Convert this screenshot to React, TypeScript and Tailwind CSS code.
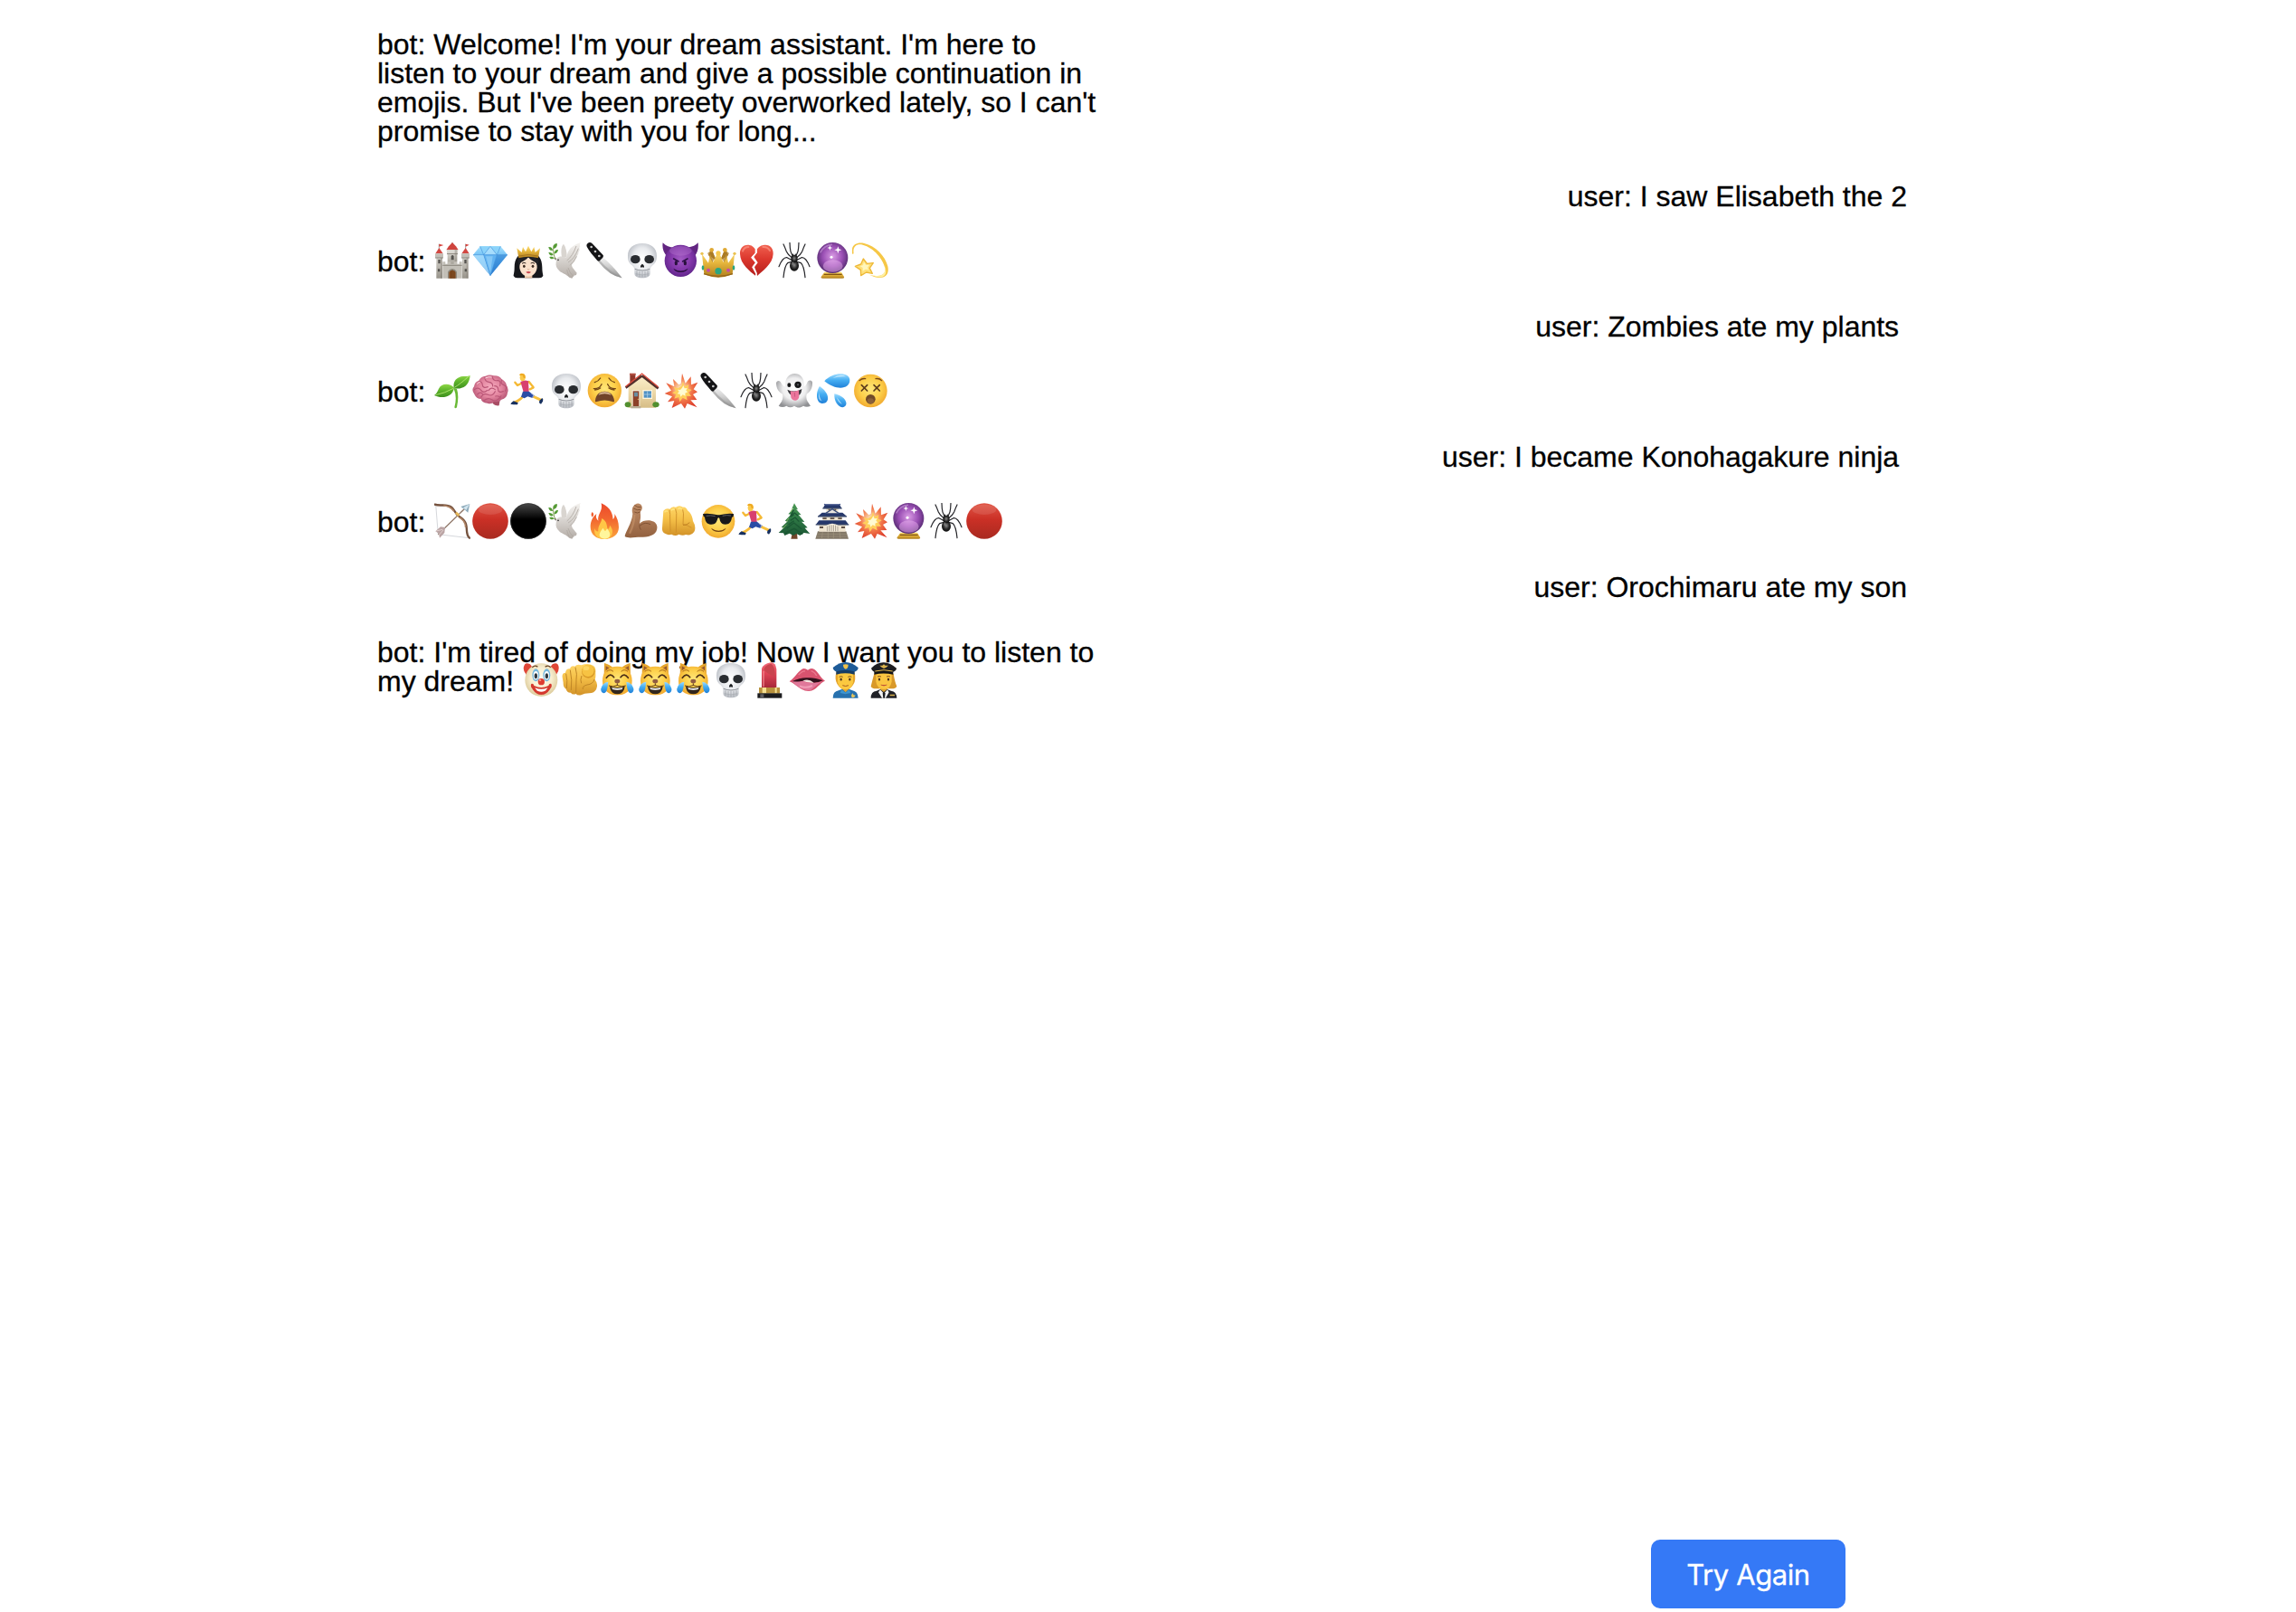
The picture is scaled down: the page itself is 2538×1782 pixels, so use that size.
import React from "react";

/* Shared gradients for the emoji drawings */
function Gradients() {
  const radial: [string, string[]][] = [
    ["gFace", ["#ffe77a", "#fdd04a", "#f0a52c"]],
    ["gSkull", ["#ffffff", "#e9ebee", "#b4b8bf"]],
    ["gDevil", ["#a35bc4", "#8438ab", "#5d2388"]],
    ["gBall", ["#d99be4", "#9a4fb4", "#4c2668"]],
    ["gBrain", ["#f6adc0", "#e3859f", "#b0506f"]],
    ["gBurst", ["#fffbd0", "#f2784a", "#dd3f2c"]],
    ["gGhost", ["#ffffff", "#eeeeef", "#8f9093"]],
    ["gSpider", ["#8a8a8a", "#2a2a2a", "#050505"]],
    ["gClown", ["#fffdf0", "#f8eed0", "#d9c795"]],
  ];
  const linear: [string, string[]][] = [
    ["gStone", ["#dddbd5", "#c4c1b9", "#97938a"]],
    ["gGold", ["#ffe27a", "#e6b63d", "#b07d1c"]],
    ["gRed", ["#e05545", "#cb3026", "#a82a20"]],
    ["gHeart", ["#f0604f", "#dc382e", "#b51f1c"]],
    ["gBlack", ["#4a4a4a", "#000000", "#000000"]],
    ["gDove", ["#f4f2ef", "#dad6d2", "#b3aca6"]],
    ["gBlade", ["#f2f2f2", "#cfcfcf", "#8c8c8c"]],
    ["gGem", ["#a8e3ff", "#5bb1f0", "#2c7fd4"]],
    ["gLeaf", ["#8fd747", "#5fb52c", "#3d8f1d"]],
    ["gHand", ["#ffd768", "#f5c048", "#d29228"]],
    ["gArm", ["#bb8964", "#ad7a56", "#92613f"]],
    ["gFire", ["#ec4a2c", "#f2662f", "#fba63a"]],
    ["gTree", ["#4d9a55", "#2f7a45", "#1c5734"]],
    ["gDrop", ["#9fdcff", "#46aef2", "#1f80d8"]],
    ["gLip", ["#f06a7a", "#dd4355", "#a8283a"]],
    ["gWall", ["#fbeecb", "#efdcae", "#d6bd86"]],
  ];
  return (
    <svg className="absolute h-0 w-0" aria-hidden="true">
      <defs>
        {radial.map(([id, c]) => (
          <radialGradient key={id} id={id} cx="0.5" cy="0.45" r="0.58">
            <stop offset="0" stopColor={c[0]} />
            <stop offset="0.55" stopColor={c[1]} />
            <stop offset="1" stopColor={c[2]} />
          </radialGradient>
        ))}
        {linear.map(([id, c]) => (
          <linearGradient key={id} id={id} x1="0" y1="0" x2="0" y2="1">
            <stop offset="0" stopColor={c[0]} />
            <stop offset="0.45" stopColor={c[1]} />
            <stop offset="1" stopColor={c[2]} />
          </linearGradient>
        ))}
      </defs>
    </svg>
  );
}

const u = (id: string) => `url(#${id})`;

const skull = (
  <>
    <path d="M60 3C30 3 12 19 12 44c0 16 4 24 12 30 5 4 7 8 10 12v16c0 11 10 16 26 16s26-5 26-16V86c3-4 5-8 10-12 8-6 12-14 12-30C108 19 90 3 60 3z" fill={u("gSkull")} />
    <path d="M35 88q25 10 50 0" stroke="#8c9096" strokeWidth="3" fill="none" />
    <ellipse cx="37" cy="56" rx="16" ry="14" fill="#292c30" />
    <ellipse cx="83" cy="56" rx="16" ry="14" fill="#292c30" />
    <path d="M60 71c-5 3-8 9-5 12 2 1 3-1 5-1s3 2 5 1c3-3 0-9-5-12z" fill="#1d1f22" />
    <path d="M42 94v17M51 96v19M60 96v20M69 96v19M78 94v17" stroke="#a3a7ad" strokeWidth="2.5" />
    <path d="M38 104q22 8 44 0" stroke="#a3a7ad" strokeWidth="2" fill="none" />
  </>
);

const spider = (
  <>
    <g fill="none" stroke="#26262a" strokeWidth="3.6" strokeLinejoin="round" strokeLinecap="round">
      <path d="M52 50Q38 40 34 30 29 16 24 6M68 50Q82 40 86 30 91 16 96 6" />
      <path d="M54 44Q46 30 46 18L45 1M66 44Q74 30 74 18L75 1" />
      <path d="M50 58 36 50Q22 48 9 80M70 58 84 50Q98 48 111 80" />
      <path d="M52 64 38 68Q28 76 24 116M68 64 82 68Q92 76 96 116" />
    </g>
    <ellipse cx="60" cy="77" rx="15" ry="18" fill={u("gSpider")} />
    <ellipse cx="60" cy="54" rx="11" ry="13" fill={u("gSpider")} />
    <path d="M56 42v-4M64 42v-4" stroke="#111" strokeWidth="3" />
    <ellipse cx="55" cy="70" rx="4" ry="6" fill="#8b8b8b" opacity="0.6" />
  </>
);

const ball = (
  <>
    <path d="M34 98h56l9 16q2 5-5 5H28q-7 0-5-5z" fill={u("gGold")} />
    <path d="M32 106h60" stroke="#7f5413" strokeWidth="4" />
    <circle cx="61" cy="51" r="51" fill={u("gBall")} />
    <ellipse cx="62" cy="78" rx="33" ry="20" fill="#f0b9f3" opacity="0.45" />
    <path d="M20 34Q32 9 60 7" stroke="#d7a9e6" strokeWidth="5" fill="none" opacity="0.5" />
    <path d="m52 9 2 7 7 2-7 2-2 7-2-7-7-2 7-2zM79 13l3 9 9 3-9 3-3 9-3-9-9-3 9-3z" fill="#fff" />
    <circle cx="57" cy="49" r="4.5" fill="#fff" />
  </>
);

const knife = (
  <>
    <path d="M40 64 54 49Q82 70 119 118q-42-7-79-54z" fill={u("gBlade")} />
    <path d="M40 64 45 59Q74 94 119 118q-42-7-79-54z" fill="#929292" opacity="0.5" />
    <path d="M5 3Q12-3 20 4l36 38q2 4-1 8L43 62q-4 1-7-3C24 45 10 30 3 16 0 10 1 6 5 3z" fill="#141416" />
    <circle cx="17" cy="15" r="4" fill="#c9c9c9" />
    <circle cx="30" cy="30" r="4" fill="#c9c9c9" />
    <circle cx="43" cy="45" r="4" fill="#c9c9c9" />
  </>
);

const dove = (
  <>
    <path d="M28 53C42 40 52 52 62 48 63 26 79 9 108 0c-5 7-3 9-2 13-4 5-2 8-2 13-5 5-3 9-5 14-4 4-3 10-8 15-4 8-9 13-13 19 0 9 9 16 17 27l-2 7-8 2-6 9-9-3C57 103 48 103 38 95 27 86 24 76 26 66z" fill={u("gDove")} />
    <path d="M62 48C62 33 59 16 51 5 42 13 42 32 45 48z" fill="#d9d5d0" />
    <path d="M66 66Q88 54 100 20M62 60Q82 44 93 12M72 76Q86 66 94 46" stroke="#b9b3ad" strokeWidth="3" fill="none" />
    <path d="M66 84q4 17 18 29M62 90q2 12 8 22" stroke="#aaa39c" strokeWidth="2" fill="none" />
    <circle cx="33" cy="58" r="2.4" fill="#222" />
    <path d="m27 53-9-3 7 9z" fill="#6d625b" />
    <path d="M24 54Q14 38 18 10" stroke="#63852f" strokeWidth="2.4" fill="none" />
    <path d="M18 21c-3-13 4-18 12-17 0 10-4 16-12 17zM15 27C5 28 2 22 1 15c8-1 14 4 14 12zM19 37c2-12 9-14 14-13-1 9-7 14-14 13zM17 42C8 46 3 40 1 33c8-1 14 3 16 9zM20 52C13 58 6 54 4 48c7-2 13-1 16 4z" fill="#559b35" />
  </>
);

const burst = (
  <>
    <path d="m62 36 4-34 11 33 18-22 1 27 22-8-14 23 13 9-15 8 13 18-21 1 22 24-33-13-8 17-12-17-31 15 8-24-22 4 15-18-25-10 22-10-17-25 27 12-4-25 19 19z" fill={u("gBurst")} />
    <path d="m64 44 5-15 5 17 14-7-2 14 12 4-11 8 9 13-16-1 3 14-15-8-10 14-3-16-15 5 6-14-13-5 13-7-9-13 15 5z" fill="#ffcf5c" />
    <path d="m66 50 4-8 4 10 9-1-4 8 6 5-9 4 1 9-9-4-7 7-2-9-9-1 6-7-5-7 9 1z" fill="#fffbd2" />
  </>
);

const runner = (
  <>
    <path d="M47 70Q38 90 12 99" stroke="#f6bc3a" strokeWidth="8" fill="none" strokeLinecap="round" />
    <path d="m68 75 30 14 4 1" stroke="#f8c23e" strokeWidth="9" fill="none" strokeLinecap="round" />
    <path d="m36 36-12 6-8-10" stroke="#f5b934" strokeWidth="7" fill="none" strokeLinejoin="round" strokeLinecap="round" />
    <path d="m62 30 15 19-12 6" stroke="#f5b934" strokeWidth="7" fill="none" strokeLinejoin="round" strokeLinecap="round" />
    <path d="M34 30Q48 22 60 28l2 36H44Z" fill="#d8406f" />
    <path d="M42 62h20l18 13-6 9-16-5-11 6-11-5z" fill="#2a4ca5" />
    <path d="m68 67 10 8-5 8" fill="none" stroke="#e9edf7" strokeWidth="2" />
    <path d="m11 94 15 6-2 6H11l-10-2q2-5 10-10zM97 92l9-8q5 4 2 11l-6 9-6-4z" fill="#17305f" />
    <ellipse cx="41" cy="16" rx="9" ry="12" fill="#fac94b" />
    <path d="M30 9Q32 0 42 3q10 2 8 16l-6-2-3-8z" fill="#efaa23" />
  </>
);

const redCircle = (
  <>
    <circle cx="60" cy="60" r="59.5" fill={u("gRed")} />
    <ellipse cx="60" cy="22" rx="40" ry="17" fill="#fff" opacity="0.1" />
  </>
);

const joyCat = (
  <>
    <path d="M17 47 18 3Q37 8 48 20h26Q85 8 104 3l1 44z" fill="#e5a52e" />
    <path d="M23 27V13q10 5 16 11zM99 27V13q-10 5-16 11z" fill="#96592f" />
    <path d="M61 14c33 0 49 20 49 48 0 30-19 47-49 47S12 92 12 62c0-28 16-48 49-48z" fill={u("gFace")} />
    <path d="M26 31q11-10 22 0M74 31q11-10 22 0" stroke="#a76c1c" strokeWidth="3" fill="none" />
    <path d="M25 52Q38 34 50 50M72 50Q84 34 97 52" stroke="#4d2f17" strokeWidth="5" fill="none" strokeLinecap="round" />
    <ellipse cx="61" cy="63" rx="9" ry="7" fill="#8f5b41" />
    <path d="M61 70v7M61 77Q47 84 33 78M61 77q14 7 28 1" stroke="#593416" strokeWidth="3" fill="none" />
    <path d="M36 80q25 8 50 0-3 26-25 26T36 80z" fill="#32271d" />
    <path d="M43 85q18 4 36 0l-2 5q-16 4-32 0z" fill="#fff" />
    <path d="M31 65Q11 68 7 88c-2 13 9 19 16 11 6-7 6-22 8-34zM91 65q20 3 24 23c2 13-9 19-16 11-6-7-6-22-8-34z" fill={u("gDrop")} />
  </>
);

const art: Record<string, React.ReactNode> = {
  castle: (
    <>
      <path d="M16 22V5M60 10V0M104 22V5" stroke="#777" strokeWidth="2" />
      <path d="m16 5 15 4-15 5zM104 5l12 3-12 6z" fill="#d5403a" />
      <path d="M44 23h32v58H44z" fill={u("gStone")} />
      <path d="M40 25 48 13 60 0l12 13 8 12z" fill="#cf443e" />
      <path d="M42 25h36v12l-5 6H47l-5-6zM7 38h20v81H7zM93 38h20v81H93z" fill={u("gStone")} />
      <path d="M4 37 16 18l13 19zM91 37l13-19 12 19z" fill="#d24842" />
      <path d="M3 37h27v13H3zM90 37h27v13H90zM28 64h9v7h8v-7h10v7h10v-7h10v7h8v-7h9v55H28z" fill="#c2bfb7" />
      <path d="M3 51h27M90 51h27M42 38h36M28 76h64" stroke="#8b877e" strokeWidth="3" />
      <path d="M13 57h7v13h-7zM100 57h7v13h-7zM56 45q5-6 9 0v13h-9zM12 88h7v9h-7zM101 88h7v9h-7z" fill="#55534f" />
      <path d="M45 119V97q15-20 30 0v22z" fill="#8e8a80" />
      <path d="M49 119V99q11-14 22 0v20z" fill="#8a5224" />
      <path d="M60 91v28M55 94v25M66 94v25" stroke="#623615" strokeWidth="2" />
      <path d="M68 23h8v40h-8zM21 50h6v69h-6zM107 50h6v69h-6z" fill="#77736b" opacity="0.35" />
    </>
  ),
  gem: (
    <>
      <path d="M26 13h68l23 28-57 69L3 41z" fill={u("gGem")} />
      <path d="m26 13 12 28L60 13zM94 13 82 41 60 13z" fill="#8bd3fa" />
      <path d="M60 13 38 41h44zM3 41h35l22 69z" fill="#b1e2fd" opacity="0.75" />
      <path d="M82 41h35l-57 69z" fill="#2878cc" opacity="0.5" />
      <path d="M38 41h44l-22 69z" fill="#62b3f1" />
      <path d="M3 41h114M38 41l22 69 22-69M26 13l12 28 22-28 22 28 12-28" stroke="#3f8ed8" strokeWidth="1.8" fill="none" />
      <path d="m45 46 15 53 8-53z" fill="#b9e5ff" opacity="0.4" />
    </>
  ),
  princess: (
    <>
      <path d="M60 33c34 0 46 22 46 50 0 16 3 22 3 28q-3 7-13 7H24q-10 0-13-7c0-6 3-12 3-28 0-28 12-50 46-50z" fill="#16171b" />
      <path d="M48 103h25v15H48z" fill="#e6bfa0" />
      <path d="M60 50c19 0 29 13 29 31 0 19-15 32-29 32S31 100 31 81c0-18 10-31 29-31z" fill="#fae1cc" />
      <path d="M29 79C31 61 51 64 60 48c9 16 28 13 31 31l4-19-23-20H45L25 58z" fill="#202126" />
      <path d="M39 70q6-5 13-1M68 69q7-4 13 1" stroke="#30251f" strokeWidth="3" fill="none" />
      <ellipse cx="46" cy="79" rx="4" ry="5" fill="#3c2c22" />
      <ellipse cx="75" cy="79" rx="4" ry="5" fill="#3c2c22" />
      <path d="M57 89q4 3 7 0" stroke="#c59074" strokeWidth="2" fill="none" />
      <path d="M52 98q8-4 17 0-8 9-17 0z" fill="#c94a52" />
      <path d="m22 19 16 14L42 15l9 16 9-20 10 20 9-16 4 18 16-14-6 33q-33-10-65 0z" fill={u("gGold")} />
      <path d="M29 45q32-9 63 0" stroke="#a4741e" strokeWidth="3" fill="none" />
    </>
  ),
  dove,
  knife,
  skull,
  devil: (
    <>
      <path d="M14 44C5 33-1 20 2 1c11 12 23 14 38 17zM108 44c9-11 13-24 11-43-11 12-24 14-38 17z" fill="#622581" />
      <circle cx="61" cy="61" r="53" fill={u("gDevil")} />
      <ellipse cx="61" cy="28" rx="37" ry="16" fill="#c68bdc" opacity="0.3" />
      <path d="m38 54 16 9M84 54 68 63" stroke="#2f114a" strokeWidth="5" strokeLinecap="round" />
      <ellipse cx="46" cy="68" rx="5" ry="8" fill="#29103d" />
      <ellipse cx="76" cy="68" rx="5" ry="8" fill="#29103d" />
      <path d="M37 86q24 17 49 0-7 13-25 13T37 86z" fill="#2a103f" />
    </>
  ),
  crown: (
    <>
      <path d="M27 42 38 22l16 39zM93 42 82 22 66 61z" fill="#a9781f" />
      <path d="m6 38 21 30 6-30 10 28L60 28l17 38 10-28 6 30 21-30-7 68q-47 20-94 0z" fill={u("gGold")} />
      <path d="M24 36 38 24l11 26-8 16zM96 36 82 24 71 50l8 16z" fill="#ab7c27" opacity="0.7" />
      <circle cx="60" cy="36" r="8" fill="#f6c94e" />
      <circle cx="6" cy="37" r="5" fill="#eac251" />
      <circle cx="114" cy="37" r="5" fill="#eac251" />
      <circle cx="38" cy="25" r="7" fill="#dfa934" />
      <circle cx="82" cy="25" r="7" fill="#dfa934" />
      <path d="M12 104q48 17 96 0" stroke="#95661a" strokeWidth="4" fill="none" />
      <circle cx="60" cy="95" r="11" fill="#2da57f" />
      <circle cx="27" cy="92" r="6" fill="#c64ba9" />
      <circle cx="93" cy="92" r="6" fill="#c64ba9" />
      <ellipse cx="9" cy="84" rx="4" ry="8" fill="#2da57f" />
      <ellipse cx="111" cy="84" rx="4" ry="8" fill="#2da57f" />
    </>
  ),
  heartbreak: (
    <>
      <path d="M56 22C48 10 40 8 32 8 14 8 5 22 6 38c1 34 34 58 51 72l1-8-11-20 11-15-14-18 13-14z" fill={u("gHeart")} />
      <path d="M63 22c8-12 19-14 27-14 18 0 27 14 26 30-1 34-38 58-53 73l-1-10-8-19 11-15-13-19 11-14z" fill={u("gHeart")} />
      <path d="M15 29q5-14 19-14M82 15q16-1 23 12" stroke="#ff9d8d" strokeWidth="6" fill="none" opacity="0.6" strokeLinecap="round" />
      <path d="m59 22-1 14-13 14 14 17-11 15 12 22" stroke="#fff" strokeWidth="4" fill="none" />
    </>
  ),
  spider,
  ball,
  dizzy: (
    <>
      <path d="M1 39C-7 11 13-3 40 3c37 8 70 43 78 76 7 31-14 44-43 36l-18-8c29 9 56 3 52-21C104 56 71 17 35 8 15 3 1 13 5 37z" fill="#f6c746" />
      <path d="M66 109c31 8 51-6 40-35 18 38-7 51-40 35z" fill="#fff0a2" />
      <path d="m37 54 12 16 21-2-12 17 9 18-20-4-18 11-1-19-18-12 19-7z" fill="#ffe17b" stroke="#eeb938" strokeWidth="4" strokeLinejoin="round" />
      <path d="m39 65 7 10 11-1-6 9 3 8-10-2-9 6v-11l-9-5 10-4z" fill="#fff6bc" />
    </>
  ),
  seedling: (
    <>
      <path d="M64 50q13 30 3 65 3 6 8 0 8-37 0-61z" fill="#69b936" />
      <path d="M66 51C54 34 23 34 15 53 10 64 7 70 0 75c21 11 59 10 66-24z" fill={u("gLeaf")} />
      <path d="M65 51C62 30 72 18 89 13c11-3 21 1 30-4-2 32-24 49-54 42z" fill={u("gLeaf")} />
      <path d="M5 74Q34 68 64 52M67 49Q86 38 114 12" stroke="#b9e978" strokeWidth="2.5" fill="none" />
    </>
  ),
  brain: (
    <>
      <path d="M60 88q9 24 29 21l4-25z" fill="#a84d64" />
      <path d="M44 11q13-7 28-1 18-1 26 12 13 6 16 20 8 12 3 25-2 19-20 22-9 11-25 7-8 11-22 5-18-1-21-14-15 0-22-16Q-4 57 6 46q2-16 16-20 6-13 22-15z" fill={u("gBrain")} />
      <path d="M7 56q13-10 22 2t21 0M22 29q11 0 12 12t18 6M42 14q-1 15 13 17t13 14M66 13q4 15 17 13t9 18M98 24q-6 12 7 17t4 20M29 82q8-16 23-9t24-11M37 94q14-14 29-4t30-13M74 44q12 0 12 12t17 6M54 59q9-14 22-3M77 78q10-3 18 6M17 72q9-10 17-2" stroke="#b95676" strokeWidth="3.5" fill="none" strokeLinecap="round" />
      <path d="M43 18q12-6 22-3M16 38q4-7 10-7" stroke="#ffd8e1" strokeWidth="3" fill="none" />
    </>
  ),
  runner,
  weary: (
    <>
      <circle cx="61" cy="59" r="56" fill={u("gFace")} />
      <path d="M28 32q12-3 19-14M94 32Q82 29 75 18" stroke="#6b4014" strokeWidth="4" fill="none" strokeLinecap="round" />
      <path d="M25 53q19 1 26-15M97 53q-19 1-26-15M29 57q10 0 18-6M93 57q-10 0-18-6" stroke="#734617" strokeWidth="4" fill="none" strokeLinecap="round" />
      <path d="M30 92c2-20 14-30 31-30s30 10 32 30q1 7-6 4-26-9-52 0-6 2-5-4z" fill="#70442a" />
      <path d="M40 74q21-9 43 0l-5-6q-17-8-33 0z" fill="#d9b896" />
    </>
  ),
  house: (
    <>
      <path d="M19 3h18v37H19z" fill="#90382b" />
      <path d="M18 2h20v6H18z" fill="#b45144" />
      <path d="M14 48 59 10l46 38v68H14z" fill={u("gWall")} />
      <path d="M59 10 5 50M59 10l54 42" stroke="#53302c" strokeWidth="8" />
      <path d="M5 46 59 3l54 44" stroke="#dd4c3d" strokeWidth="4" fill="none" />
      <path d="M26 58h26v54H26z" fill="#f8f0df" />
      <path d="M29 61h20v50H29z" fill="#8c4029" />
      <path d="M33 65h12v14H33z" fill="#6a8da2" />
      <circle cx="46" cy="88" r="2" fill="#e8c068" />
      <path d="M61 57h32v30H61z" fill="#fff5dc" />
      <path d="M65 61h25v22H65z" fill="#4f91c5" />
      <path d="M77 61v22M65 72h25" stroke="#bcd9eb" strokeWidth="2" />
      <path d="M22 111h33v7H22z" fill="#b7aa93" />
      <ellipse cx="12" cy="106" rx="10" ry="9" fill="#528f2f" />
      <ellipse cx="105" cy="106" rx="11" ry="9" fill="#528f2f" />
    </>
  ),
  burst,
  ghost: (
    <>
      <path d="M30 46C28 20 41 3 61 3s34 17 31 43c8-1 9-12 14-18 6-6 16-1 14 9-1 18-9 29-19 34-4 18 3 26 13 39-8 4-17 4-24 0-10 7-20 7-30 0-9 6-17 6-26 0-9 5-18 5-26 0 11-13 16-23 13-39C10 66 1 54 0 37c-1-10 9-13 14-7 5 7 8 16 16 16z" fill={u("gGhost")} />
      <ellipse cx="43" cy="41" rx="6" ry="7" fill="#18191b" />
      <circle cx="72" cy="40" r="11" fill="#18191b" />
      <circle cx="72" cy="40" r="3" fill="#5e6065" />
      <path d="M37 56q24 12 48-2-2 24-21 24-20 0-27-22z" fill="#37353a" />
      <path d="M47 61q14 4 28-3l1 19c0 18-22 20-27 5z" fill="#eb759b" />
      <path d="m61 66 1 14" stroke="#bd4d73" strokeWidth="2" />
    </>
  ),
  sweat: (
    <g fill={u("gDrop")}>
      <path d="M34 28C64-5 118-2 118 25c0 31-47 35-84 3z" />
      <path d="M18 45c-14 20-12 56 8 57 27 1 27-34-8-57z" />
      <path d="M67 70c-2 24 12 45 28 45 24-6 8-39-28-45z" />
      <g fill="#def5ff" opacity="0.65">
        <path d="M62 18q25-16 43-5-23-2-43 5zM16 65q-5 26 10 29-9-10-10-29zM75 82q4 18 18 23-9-11-18-23z" />
      </g>
    </g>
  ),
  dead: (
    <>
      <circle cx="61" cy="60" r="55" fill={u("gFace")} />
      <path d="M24 26q9-8 20-6M78 20q12-2 20 6" stroke="#7a4b19" strokeWidth="4" fill="none" strokeLinecap="round" />
      <path d="m31 41 19 19m0-19L31 60m41-19 19 19m0-19L72 60" stroke="#5d3c1c" strokeWidth="5" strokeLinecap="round" />
      <circle cx="61" cy="88" r="16" fill="#704a28" />
      <ellipse cx="61" cy="94" rx="11" ry="9" fill="#89603a" />
    </>
  ),
  bow: (
    <>
      <path d="M5 5 13 104 115 116" stroke="#bfc3c8" strokeWidth="2" fill="none" />
      <path d="M2 5c18 7 38-4 56 10 8 7 10 16 20 26 10 9 22 12 27 28 6 19-2 35 12 47" stroke="#76533f" strokeWidth="7" fill="none" strokeLinecap="round" />
      <path d="M31 9q20 0 34 18M83 48q20 10 21 33" stroke="#b18565" strokeWidth="5" fill="none" />
      <path d="M13 104 103 17" stroke="#8f7768" strokeWidth="4" />
      <path d="m72 32 10 10" stroke="#e8b957" strokeWidth="8" />
      <path d="m88 12 30-9-6 29-10-9z" fill="#8eabbb" />
      <path d="m96 16 22-13-12 21z" fill="#d2e4ee" />
      <path d="m4 94 17-15 15 2-2 18-16 17-3-15z" fill="#baa4a4" />
      <path d="m6 93 22-5M15 107l15-17" stroke="#e1cfcd" strokeWidth="3" />
    </>
  ),
  red: redCircle,
  black: (
    <>
      <circle cx="60" cy="60" r="59.5" fill={u("gBlack")} />
      <circle cx="60" cy="60" r="58" fill="none" stroke="#333" strokeWidth="2" />
    </>
  ),
  fire: (
    <>
      <path d="M50 1c34 15 38 39 39 54 5-6 6-12 5-19 8 13 14 27 14 45 0 24-21 39-48 39S14 105 14 79c0-20 9-34 20-43-3 10-1 17 6 23C36 36 56 29 50 1zM20 30c7 6 5 12 0 17-4-5-5-11 0-17z" fill={u("gFire")} />
      <path d="M62 119c-26 0-38-14-34-36 1 9 7 12 12 11-2-19 10-26 12-43 17 10 16 23 19 36 5-1 7-8 7-13 19 21 5 45-16 45z" fill="#ffc646" />
      <path d="M62 119c-24-3-22-18-6-36 3 6 4 8 7 10 4-3 5-5 6-8 16 18 12 33-7 34z" fill="#fff69c" />
    </>
  ),
  biceps: (
    <>
      <path d="M28 36Q22 15 36 5 48-3 56 6c6 8 4 17-3 24 3 16 0 26-2 38 15-15 55-14 58 10 3 24-21 37-53 35-24 0-40 6-54-2C4 95 26 66 28 36z" fill={u("gArm")} />
      <path d="M34 7q10 9 22 7M31 18q12 8 23 4M53 30q-10 6-19 0M51 71q-2 10 4 18M54 74q15-12 33-3" stroke="#7a4c2e" strokeWidth="2.5" fill="none" />
      <path d="M34 39q-1 33-16 62" stroke="#c79369" strokeWidth="7" fill="none" opacity="0.6" />
    </>
  ),
  fist: (
    <>
      <path d="M4 26q9-10 21-6 8-11 20-6 12-9 24 0 9-2 15 11 15 10 18 35 11 18 5 34-9 16-29 11-10 5-23-1-11 8-24 0-11 4-22-3-10-3-9-18z" fill={u("gHand")} />
      <path d="M24 23q3 14 2 28l1 44M44 20q5 14 3 28l-1 50M68 22q4 14 2 26l-1 24M69 72q14 0 28 10" stroke="#cc8c28" strokeWidth="2.6" fill="none" />
      <path d="M69 73q14 1 22-8" stroke="#b97a1d" strokeWidth="2.6" fill="none" />
      <path d="M8 31q4-7 10-3M30 25q5-7 11-2M53 20q6-6 12 1" stroke="#ffe783" strokeWidth="4" fill="none" />
    </>
  ),
  cool: (
    <>
      <circle cx="60" cy="61" r="55" fill={u("gFace")} />
      <path d="M9 36Q32 33 58 40h6q26-7 47-4l-1 9-5 3c-2 16-9 23-22 23s-17-8-19-20q-3-4-6 0c-3 13-8 20-20 20-14 0-21-7-23-24l-4-3z" fill="#18191b" />
      <path d="M20 43q15-3 30 1M74 43q14-4 28-1" stroke="#5c5e64" strokeWidth="3" fill="none" />
      <path d="M36 83q25 18 50 0-7 13-25 13T36 83z" fill="#754414" />
    </>
  ),
  tree: (
    <>
      <path d="M53 102h16l2 17H49z" fill="#71452a" />
      <path d="m60 1 12 21-6-2 17 20-9-1 20 24-10-1 20 20-9 1 17 19-20-3-13 9-12-6-10 6-13-7-16 7-4-8-16-1 18-17-9-1 21-20-9-2 20-21-9-1 18-19-6 1z" fill={u("gTree")} />
      <path d="m58 23-9 18 12-8 11 9M47 58l16-10 13 14M35 84l24-18 25 20M29 100l31-15 28 18M48 46l11-8M41 72l18-13" stroke="#1b5733" strokeWidth="4" fill="none" />
      <path d="m55 18-7 12M42 50l-8 12M35 71 21 85" stroke="#82b65f" strokeWidth="3" />
    </>
  ),
  japanCastle: (
    <>
      <path d="M12 94h94l8 25H4z" fill="#827767" />
      <path d="M9 103h100M7 111h105M28 95l-3 24M46 95v24M64 95v24M84 95l3 24" stroke="#a0967f" strokeWidth="2" />
      <path d="M40 16h40v22H40zM28 40h64v20H28zM16 68h88v27H16z" fill="#efe4cf" />
      <path d="M36 5h48l7 12H29zM26 32h68l14 12H12zM16 58h88l10 13H6z" fill="#26386b" />
      <path d="M33 4q4 2 7 2h40q3 0 7-2" stroke="#3c4f86" strokeWidth="4" fill="none" />
      <path d="M28 18h64M12 45h96M5 72h110" stroke="#17284f" strokeWidth="3" />
      <path d="m38 34 22-15 22 15z" fill="#e9e6e0" />
      <path d="m36 36 24-16 24 16" stroke="#334979" strokeWidth="4" fill="none" />
      <path d="M47 20h6v5h-6zM67 20h6v5h-6zM28 49h13v5H28zM53 49h14v5H53zM79 49h13v5H79zM18 78h12v6H18zM90 78h12v6H90z" fill="#5e5148" />
      <path d="M38 94V76q22-16 44 0v18z" fill="#f8f1e0" />
      <path d="M43 94V77M50 94V74M57 94V73M64 94V73M71 94V74M78 94V77" stroke="#8d8373" strokeWidth="2.4" />
    </>
  ),
  clown: (
    <>
      <path d="M24 7Q7-2 4 12q-6 14 7 29l9 9 17-26zM98 7q17-9 20 5 4 15-7 29l-9 9-17-26z" fill="#df4636" />
      <ellipse cx="61" cy="59" rx="54" ry="55" fill={u("gClown")} />
      <ellipse cx="43" cy="43" rx="12" ry="21" fill="#77b7dd" />
      <ellipse cx="79" cy="43" rx="12" ry="21" fill="#77b7dd" />
      <ellipse cx="43" cy="44" rx="8" ry="14" fill="#fff" />
      <ellipse cx="79" cy="44" rx="8" ry="14" fill="#fff" />
      <ellipse cx="43" cy="46" rx="5" ry="9" fill="#30383f" />
      <ellipse cx="79" cy="46" rx="5" ry="9" fill="#30383f" />
      <path d="M31 17q10-9 18-1M74 16q9-8 18 1" stroke="#6b4223" strokeWidth="4" fill="none" />
      <circle cx="61" cy="65" r="11" fill="#dd3c31" />
      <ellipse cx="57" cy="60" rx="4" ry="3" fill="#ff9b83" />
      <path d="M28 72q7-2 9 6 24 12 48 0 2-8 9-6 4 9-3 16-12 20-30 20T31 88q-7-7-3-16z" fill="#d4382e" />
      <path d="M40 85q21 9 42 0-5 13-21 13T40 85z" fill="#fff" />
    </>
  ),
  point: (
    <>
      <path d="M5 50q-2-14 10-15 2-14 15-13 4-12 16-8 8-9 22-4 21-9 39 1 10 6 8 24 1 17-2 23 8 10 7 22-3 22-26 23-16 0-27 6-13 2-17-4-12 5-17-4-13 1-16-12-10-6-9-21z" fill={u("gHand")} />
      <path d="M17 38q6 23 2 49M31 26q7 33 3 67M48 17q7 25 3 41l-1 43M69 45q-6 15-1 25M111 57q-4 16-24 18-16 4-14 15" stroke="#c08626" strokeWidth="3" fill="none" />
      <circle cx="91" cy="31" r="22" fill="#d99a28" />
      <circle cx="90" cy="28" r="20" fill="#f7c343" />
      <ellipse cx="84" cy="20" rx="10" ry="7" fill="#ffe37b" opacity="0.6" />
    </>
  ),
  joyCat,
  lipstick: (
    <>
      <path d="M36 84V22Q41 5 66 1q17 1 19 22v61z" fill={u("gLip")} />
      <path d="M67 5Q45 10 43 25q8 13 37 24 0-37-13-44z" fill="#c9444f" />
      <path d="M42 29v53" stroke="#ff9ba0" strokeWidth="5" opacity="0.6" />
      <path d="M27 84h69v20H27z" fill="#b8923d" />
      <path d="M38 84h13v20H38zM80 84h6v20h-6z" fill="#f5e091" />
      <path d="M22 103h81v16H22z" fill="#1c1c1e" />
      <path d="M31 106h12v12H31z" fill="#5c5c60" />
    </>
  ),
  lips: (
    <>
      <path d="M2 64C18 54 36 22 50 21q7 0 13 5 8-7 17-4c17 6 22 29 40 40-18 6-29 33-54 34C37 96 21 70 2 64z" fill="#d9536f" />
      <path d="M10 64q30-14 53-12 19-2 50 9-15 7-30 7Q62 58 44 64q-16 4-34 0z" fill="#33101b" />
      <path d="M46 62q18-10 37 6-18 2-37-6z" fill="#f3e6e2" />
      <path d="M10 64q20 2 36-2 14 8 36 7 16 0 30-6-19 11-38 29-26 8-64-28z" fill="#e0789a" />
      <path d="M36 79q20 9 42-1" stroke="#ffbdd0" strokeWidth="6" fill="none" opacity="0.55" />
      <path d="M32 42q14-14 22-12M74 29q12 4 18 16" stroke="#f38a9d" strokeWidth="4" fill="none" opacity="0.7" />
    </>
  ),
  police: (
    <>
      <path d="M31 34q-6 24 3 38 12 20 28 20t27-20q8-13 3-38z" fill="#e4a42c" />
      <path d="M50 82h24v18H50z" fill="#e4a32e" />
      <path d="M20 119q0-22 19-25l12-5 11 11 11-11 12 5q18 3 19 25z" fill="#2771ae" />
      <path d="m49 91-5 11 17 4 18-4-5-11-12 10z" fill="#3f95cf" />
      <path d="M36 40q27-10 51 0v27q-5 24-25 24T36 67z" fill="#fbc940" />
      <path d="M41 49q6-4 12 0M70 49q7-4 12 0" stroke="#805019" strokeWidth="3" fill="none" />
      <ellipse cx="47" cy="57" rx="3.5" ry="4.5" fill="#4b321e" />
      <ellipse cx="76" cy="57" rx="3.5" ry="4.5" fill="#4b321e" />
      <path d="M52 77q10 5 20 0" stroke="#a85d21" strokeWidth="3" fill="none" />
      <path d="M20 18Q41 0 62 0t42 18q0 10-12 14H32Q21 27 20 18z" fill="#1d5b98" />
      <path d="M31 31q31-10 61 0v10q-31-8-61 0z" fill="#153c65" />
      <path d="M54 8q8-3 17 0 0 13-9 15-8-3-8-15z" fill="#efc24b" />
      <path d="m85 103 4 6 6 1-4 6-8 2-2-8z" fill="#e8c65b" />
    </>
  ),
  pilot: (
    <>
      <path d="M31 38q-7 25-11 42 5 9 19 8h48q14 1 19-8-7-16-11-42z" fill="#d9992a" />
      <path d="M51 80h24v23H51z" fill="#dda12f" />
      <path d="M20 119q0-22 19-24l12-5 12 9 11-9 13 5q18 2 19 24z" fill="#202127" />
      <path d="m51 91 12 13 12-13 5 9-11 19H57l-12-19z" fill="#f3f3f4" />
      <path d="m59 103 4-3 5 3-2 16h-5z" fill="#1b1c21" />
      <path d="M37 39q26-10 52 0v26q-5 25-26 25T37 65z" fill="#fac541" />
      <path d="M42 48q7-3 12 0M72 48q7-3 12 0" stroke="#86511c" strokeWidth="3" fill="none" />
      <ellipse cx="48" cy="57" rx="3.5" ry="4.5" fill="#4b321e" />
      <ellipse cx="78" cy="57" rx="3.5" ry="4.5" fill="#4b321e" />
      <path d="M53 75q10 6 20 0" fill="#c54d45" stroke="#b3452e" strokeWidth="2" />
      <path d="M21 20Q42 0 63 1t42 19q0 7-11 12H31Q22 27 21 20z" fill="#1d1e22" />
      <path d="M31 31q32-8 63 0v10q-32-7-63 0z" fill="#121316" />
      <path d="M34 30q29-8 58 0" stroke="#e5bb51" strokeWidth="3" fill="none" />
      <path d="M49 11h9l5-4 5 4h10l-7 6-8 4-7-4zM83 107h16v5H83z" fill="#d7b14c" />
    </>
  ),
};

function Emoji({ name }: { name: string }) {
  return (
    <svg
      viewBox="0 0 120 120"
      role="img"
      aria-label={name}
      className="mx-px -mt-1.5 -mb-1 inline-block h-10 w-10 align-[-4px]"
    >
      {art[name]}
    </svg>
  );
}

type Message = { from: "bot" | "user"; text?: string; emojis?: string[] };

const messages: Message[] = [
  {
    from: "bot",
    text: "Welcome! I'm your dream assistant. I'm here to listen to your dream and give a possible continuation in emojis. But I've been preety overworked lately, so I can't promise to stay with you for long...",
  },
  { from: "user", text: "I saw Elisabeth the 2" },
  {
    from: "bot",
    emojis: ["castle", "gem", "princess", "dove", "knife", "skull", "devil", "crown", "heartbreak", "spider", "ball", "dizzy"],
  },
  { from: "user", text: "Zombies ate my plants " },
  {
    from: "bot",
    emojis: ["seedling", "brain", "runner", "skull", "weary", "house", "burst", "knife", "spider", "ghost", "sweat", "dead"],
  },
  { from: "user", text: "I became Konohagakure ninja " },
  {
    from: "bot",
    emojis: ["bow", "red", "black", "dove", "fire", "biceps", "fist", "cool", "runner", "tree", "japanCastle", "burst", "ball", "spider", "red"],
  },
  { from: "user", text: "Orochimaru ate my son" },
  {
    from: "bot",
    text: "I'm tired of doing my job! Now I want you to listen to my dream! ",
    emojis: ["clown", "point", "joyCat", "joyCat", "joyCat", "skull", "lipstick", "lips", "police", "pilot"],
  },
];

function Bubble({ from, text = "", emojis = [] }: Message) {
  const side = from === "bot" ? "w-[810px] self-start whitespace-pre-wrap" : "self-end whitespace-pre";
  return (
    <p className={side}>
      {`${from}: ${text}`}
      {emojis.map((name, i) => (
        <Emoji key={i} name={name} />
      ))}
    </p>
  );
}

export default function App() {
  return (
    <div className="flex h-screen flex-col overflow-hidden bg-white font-['Liberation_Sans',Arial,sans-serif] text-[32px] leading-8 text-black">
      <Gradients />
      <main className="ml-[417px] flex w-[1691px] grow flex-col gap-10 pt-[33px] [-webkit-text-stroke:0.3px_black]">
        {messages.map((m, i) => (
          <Bubble key={i} {...m} />
        ))}
      </main>
      <footer className="mr-[498px] mb-1 flex justify-end">
        <button className="h-[76px] w-[215px] rounded-[10px] bg-[#3579f6] pt-0.5 font-['Inter',sans-serif] text-[31px] leading-8 tracking-[-0.4px] text-white [-webkit-text-stroke:0.3px_white]">
          Try Again
        </button>
      </footer>
    </div>
  );
}
